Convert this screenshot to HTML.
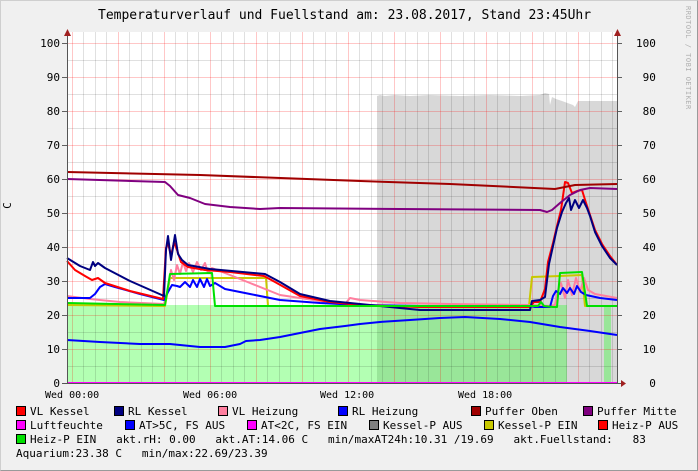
<!DOCTYPE html>
<html><head><meta charset="utf-8"><style>
html,body{margin:0;padding:0;}
body{width:698px;height:471px;background:#f0f0f0;position:relative;overflow:hidden;font-family:"DejaVu Sans Mono","Liberation Mono",monospace;font-size:11px;color:#000;}
.frame{position:absolute;left:0;top:0;width:696px;height:469px;border:1px solid #cfcfcf;border-right-color:#9a9a9a;border-bottom-color:#9a9a9a;}
.t{position:absolute;white-space:pre;line-height:13px;}
.sw{position:absolute;width:8px;height:8px;border:1px solid #000;}
svg{position:absolute;left:0;top:0;}
</style></head><body>
<div class="frame"></div>
<div class="t" style="left:98px;top:9px;font-size:13px;">Temperaturverlauf und Fuellstand am: 23.08.2017, Stand 23:45Uhr</div>
<div class="t" style="left:680px;top:6px;font-size:7px;color:#b0b0b0;transform-origin:0 0;transform:translate(14px,0) rotate(90deg);letter-spacing:0.5px;">RRDTOOL / TOBI OETIKER</div>
<div class="t" style="left:4px;top:199px;transform:rotate(-90deg);">C</div>
<svg width="698" height="471" viewBox="0 0 698 471">
<rect x="67" y="32" width="550" height="351" fill="#fff"/>
<polygon fill="#d8d8d8" points="377,383 377,96 380,95 385,96 395,95 410,96 430,95 460,96 490,95 520,96 540,95 545,93 549,94 550,105 552,97 556,99 562,101 573,105 575,107 578,101 617,101 617,383"/>
<polygon fill="#b3ffb3" points="67,383 67,305 377,305 377,383"/>
<polygon fill="#99e699" points="377,383 377,305 567,305 567,383"/>
<polygon fill="#99e699" points="604,383 604,305 611,305 611,383"/>
<g stroke-width="1">
<g stroke="#000" stroke-opacity="0.12">
<path d="M83.5 32V383M95.5 32V383M106.5 32V383M129.5 32V383M141.5 32V383M152.5 32V383M175.5 32V383M187.5 32V383M198.5 32V383M221.5 32V383M233.5 32V383M244.5 32V383M267.5 32V383M279.5 32V383M290.5 32V383M313.5 32V383M325.5 32V383M336.5 32V383M359.5 32V383M371.5 32V383M382.5 32V383M405.5 32V383M417.5 32V383M428.5 32V383M451.5 32V383M463.5 32V383M474.5 32V383M497.5 32V383M509.5 32V383M520.5 32V383M543.5 32V383M555.5 32V383M566.5 32V383M589.5 32V383M601.5 32V383M612.5 32V383"/>
<path d="M67 366.5H617M67 332.5H617M67 298.5H617M67 264.5H617M67 230.5H617M67 196.5H617M67 162.5H617M67 128.5H617M67 94.5H617M67 60.5H617"/>
</g>
<g stroke="#ff0000" stroke-opacity="0.22">
<path d="M72.5 32V383M118.5 32V383M164.5 32V383M210.5 32V383M256.5 32V383M302.5 32V383M348.5 32V383M394.5 32V383M440.5 32V383M486.5 32V383M532.5 32V383M578.5 32V383"/>
<path d="M67 349.5H617M67 315.5H617M67 281.5H617M67 247.5H617M67 213.5H617M67 179.5H617M67 145.5H617M67 111.5H617M67 77.5H617M67 43.5H617"/>
</g>
<g stroke="#000" stroke-opacity="0.6">
<path d="M62 43.5H67M62 77.5H67M62 111.5H67M62 145.5H67M62 179.5H67M62 213.5H67M62 247.5H67M62 281.5H67M62 315.5H67M62 349.5H67M617 43.5H622M617 77.5H622M617 111.5H622M617 145.5H622M617 179.5H622M617 213.5H622M617 247.5H622M617 281.5H622M617 315.5H622M617 349.5H622"/>
</g>
</g>
<g fill="none" stroke-width="2" stroke-linejoin="round">
<polyline stroke="#0000ff" points="67,340 100,342 140,344 170,344 200,347 225,347 240,344 246,341 260,340 280,337 300,333 320,329 345,326 360,324 380,322 410,320 440,318 465,317 500,319 530,322 560,327 590,331 617,335"/>
<polyline stroke="#c8c800" points="67,305 165,306 170,278 266,278 268,306 529,306 532,277 560,276 582,275 585,306 617,306"/>
<polyline stroke="#ff7f9f" points="67,296 90,299 120,302 164,304 168,289 171,270 174,280 177,265 180,274 183,262 186,271 189,263 193,272 197,262 201,270 205,263 208,273 212,268 230,275 250,283 280,295 320,301 345,304 350,298 360,300 400,303 450,304 530,305 550,306 555,305 558,290 561,283 565,298 568,280 572,295 576,278 580,292 584,278 588,290 595,294 617,298"/>
<polyline stroke="#0000ff" points="67,298 90,298 95,294 100,287 105,284 115,287 140,294 164,300 168,292 172,285 177,286 180,287 185,282 190,287 193,280 197,287 200,279 204,287 207,279 210,286 215,283 225,289 250,294 280,300 320,303 360,305 420,306 530,306 535,307 550,307 553,296 556,291 560,294 563,288 567,293 570,288 574,294 577,286 581,292 586,295 600,298 617,300"/>
<polyline stroke="#ff0000" points="67,261 75,270 85,276 92,280 98,278 105,283 130,291 163,299 166,248 168,243 171,256 174,242 177,250 181,262 188,267 205,270 230,272 264,276 275,282 300,296 330,302 360,305 420,307 530,307 534,302 540,302 545,289 548,262 553,243 557,226 561,210 565,182 568,183 572,193 577,191 582,190 586,203 590,215 595,230 602,244 610,256 617,265"/>
<polyline stroke="#000080" points="67,258 80,266 90,270 93,262 95,266 98,263 105,268 130,281 164,296 166,250 168,236 171,260 175,235 178,254 182,260 188,265 210,269 265,274 280,282 300,294 330,301 380,306 420,310 530,310 532,301 540,300 545,297 549,264 553,246 557,228 562,212 566,203 569,198 571,210 575,200 579,208 583,200 587,208 590,216 595,232 602,246 610,258 617,265"/>
<polyline stroke="#a00000" points="67,172 200,175 360,181 450,184 555,189 575,185 617,184"/>
<polyline stroke="#800080" points="67,179 165,182 170,186 178,195 190,198 205,204 230,207 260,209 280,208 400,209 540,210 547,212 552,210 560,203 570,195 580,190 590,188 617,189"/>
<polyline stroke="#00e000" points="67,303 165,305 170,274 212,273 215,306 538,306 541,302 544,306 553,307 557,307 560,273 582,272 587,306 617,306"/>
<polyline stroke="#ff00ff" points="67,383 617,383"/>
</g>
<path d="M67.5 383V36M617.5 32V383M62 383.5H622" stroke="#555" stroke-width="1" fill="none"/>
<polygon points="64,36 71,36 67.5,29" fill="#a02020"/>
<polygon points="621,380 621,387 626,383.5" fill="#a02020"/>
<polygon points="614,36 621,36 617.5,29" fill="#a02020"/>
</svg>
<div class="t" style="left:32px;top:37px;text-align:right;width:28px;">100</div>
<div class="t" style="left:32px;top:71px;text-align:right;width:28px;">90</div>
<div class="t" style="left:32px;top:105px;text-align:right;width:28px;">80</div>
<div class="t" style="left:32px;top:139px;text-align:right;width:28px;">70</div>
<div class="t" style="left:32px;top:173px;text-align:right;width:28px;">60</div>
<div class="t" style="left:32px;top:207px;text-align:right;width:28px;">50</div>
<div class="t" style="left:32px;top:241px;text-align:right;width:28px;">40</div>
<div class="t" style="left:32px;top:275px;text-align:right;width:28px;">30</div>
<div class="t" style="left:32px;top:309px;text-align:right;width:28px;">20</div>
<div class="t" style="left:32px;top:343px;text-align:right;width:28px;">10</div>
<div class="t" style="left:32px;top:377px;text-align:right;width:28px;">0</div>
<div class="t" style="left:636px;top:37px;">100</div>
<div class="t" style="left:636px;top:71px;"> 90</div>
<div class="t" style="left:636px;top:105px;"> 80</div>
<div class="t" style="left:636px;top:139px;"> 70</div>
<div class="t" style="left:636px;top:173px;"> 60</div>
<div class="t" style="left:636px;top:207px;"> 50</div>
<div class="t" style="left:636px;top:241px;"> 40</div>
<div class="t" style="left:636px;top:275px;"> 30</div>
<div class="t" style="left:636px;top:309px;"> 20</div>
<div class="t" style="left:636px;top:343px;"> 10</div>
<div class="t" style="left:636px;top:377px;">  0</div>
<div class="t" style="left:45px;top:389px;font-size:10px;">Wed 00:00</div>
<div class="t" style="left:183px;top:389px;font-size:10px;">Wed 06:00</div>
<div class="t" style="left:320px;top:389px;font-size:10px;">Wed 12:00</div>
<div class="t" style="left:458px;top:389px;font-size:10px;">Wed 18:00</div>

<div class="sw" style="left:16px;top:406px;background:#ff0000"></div><div class="t" style="left:30px;top:405px;">VL Kessel</div>
<div class="sw" style="left:114px;top:406px;background:#000080"></div><div class="t" style="left:128px;top:405px;">RL Kessel</div>
<div class="sw" style="left:218px;top:406px;background:#ff7f9f"></div><div class="t" style="left:232px;top:405px;">VL Heizung</div>
<div class="sw" style="left:338px;top:406px;background:#0000ff"></div><div class="t" style="left:352px;top:405px;">RL Heizung</div>
<div class="sw" style="left:471px;top:406px;background:#a00000"></div><div class="t" style="left:485px;top:405px;">Puffer Oben</div>
<div class="sw" style="left:583px;top:406px;background:#800080"></div><div class="t" style="left:597px;top:405px;">Puffer Mitte</div>

<div class="sw" style="left:16px;top:420px;background:#ff00ff"></div><div class="t" style="left:30px;top:419px;">Luftfeuchte</div>
<div class="sw" style="left:125px;top:420px;background:#0000ff"></div><div class="t" style="left:139px;top:419px;">AT&gt;5C, FS AUS</div>
<div class="sw" style="left:247px;top:420px;background:#ff00ff"></div><div class="t" style="left:261px;top:419px;">AT&lt;2C, FS EIN</div>
<div class="sw" style="left:369px;top:420px;background:#808080"></div><div class="t" style="left:383px;top:419px;">Kessel-P AUS</div>
<div class="sw" style="left:484px;top:420px;background:#c8c800"></div><div class="t" style="left:498px;top:419px;">Kessel-P EIN</div>
<div class="sw" style="left:598px;top:420px;background:#ff0000"></div><div class="t" style="left:612px;top:419px;">Heiz-P AUS</div>

<div class="sw" style="left:16px;top:434px;background:#00e000"></div><div class="t" style="left:30px;top:433px;">Heiz-P EIN   akt.rH: 0.00   akt.AT:14.06 C   min/maxAT24h:10.31 /19.69   akt.Fuellstand:   83</div>
<div class="t" style="left:16px;top:447px;">Aquarium:23.38 C   min/max:22.69/23.39</div>
</body></html>
